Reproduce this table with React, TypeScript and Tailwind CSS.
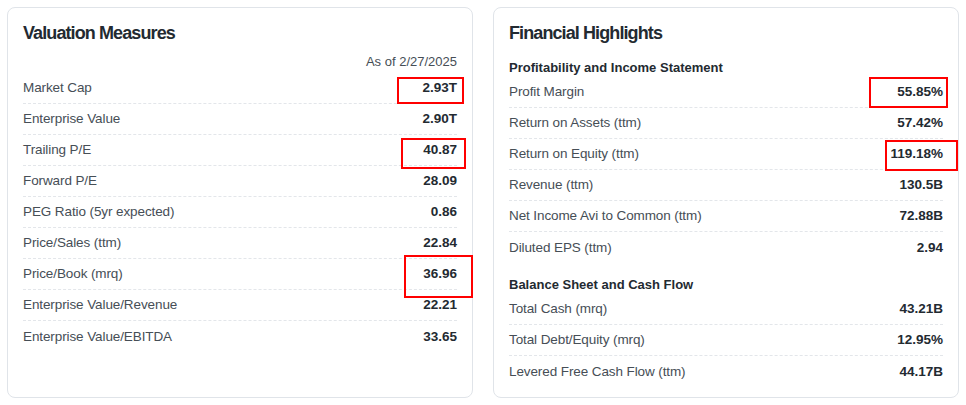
import React from "react";

type Row = { label: string; value: string };

const valuation: Row[] = [
  { label: "Market Cap", value: "2.93T" },
  { label: "Enterprise Value", value: "2.90T" },
  { label: "Trailing P/E", value: "40.87" },
  { label: "Forward P/E", value: "28.09" },
  { label: "PEG Ratio (5yr expected)", value: "0.86" },
  { label: "Price/Sales (ttm)", value: "22.84" },
  { label: "Price/Book (mrq)", value: "36.96" },
  { label: "Enterprise Value/Revenue", value: "22.21" },
  { label: "Enterprise Value/EBITDA", value: "33.65" },
];

const profitability: Row[] = [
  { label: "Profit Margin", value: "55.85%" },
  { label: "Return on Assets (ttm)", value: "57.42%" },
  { label: "Return on Equity (ttm)", value: "119.18%" },
  { label: "Revenue (ttm)", value: "130.5B" },
  { label: "Net Income Avi to Common (ttm)", value: "72.88B" },
  { label: "Diluted EPS (ttm)", value: "2.94" },
];

const balance: Row[] = [
  { label: "Total Cash (mrq)", value: "43.21B" },
  { label: "Total Debt/Equity (mrq)", value: "12.95%" },
  { label: "Levered Free Cash Flow (ttm)", value: "44.17B" },
];

function Rows({ rows }: { rows: Row[] }) {
  return (
    <div className="flex flex-col">
      {rows.map((r, i) => (
        <div
          key={r.label}
          className={
            i < rows.length - 1
              ? "flex h-[31px] items-center justify-between border-b border-dashed border-[#e3e6ea]"
              : "flex h-[31px] items-center justify-between"
          }
        >
          <span className="text-[13.5px] leading-[18px] tracking-[-0.1px] text-[#464e56]">{r.label}</span>
          <span className="text-[13.5px] font-bold leading-[18px] text-[#232a31]">{r.value}</span>
        </div>
      ))}
    </div>
  );
}

export default function App() {
  return (
    <div className="flex h-[405px] w-[966px] gap-[20px] bg-white p-[7px] font-['Liberation_Sans',Arial,sans-serif]">
      {/* Valuation Measures */}
      <div className="relative flex h-[391px] w-[466px] flex-col rounded-lg border border-[#e0e4e9] px-[15px] pt-[15px]">
        <h2 className="text-[18px] font-bold leading-[20px] tracking-[-0.9px] text-[#232a31]">
          Valuation Measures
        </h2>
        <div className="mt-[9px] text-right text-[13px] leading-[20px] text-[#464e56]">
          As of 2/27/2025
        </div>
        <div className="mt-px">
          <Rows rows={valuation} />
        </div>
        <div className="absolute left-[389px] top-[69px] h-[27px] w-[67px] border-2 border-[#ff0000]" />
        <div className="absolute left-[393px] top-[130px] h-[31px] w-[65px] border-2 border-[#ff0000]" />
        <div className="absolute left-[396px] top-[247px] h-[43px] w-[69px] border-2 border-[#ff0000]" />
      </div>

      {/* Financial Highlights */}
      <div className="relative flex h-[391px] w-[466px] flex-col rounded-lg border border-[#e0e4e9] px-[15px] pt-[15px]">
        <h2 className="text-[18px] font-bold leading-[20px] tracking-[-0.9px] text-[#232a31]">
          Financial Highlights
        </h2>
        <h3 className="mt-[16px] text-[13px] font-bold leading-[18px] text-[#232a31]">
          Profitability and Income Statement
        </h3>
        <Rows rows={profitability} />
        <h3 className="mt-[13px] text-[13px] font-bold leading-[18px] text-[#232a31]">
          Balance Sheet and Cash Flow
        </h3>
        <Rows rows={balance} />
        <div className="absolute left-[375px] top-[69px] h-[31px] w-[79px] border-2 border-[#ff0000]" />
        <div className="absolute left-[391px] top-[132px] h-[31px] w-[73px] border-2 border-[#ff0000]" />
      </div>
    </div>
  );
}
